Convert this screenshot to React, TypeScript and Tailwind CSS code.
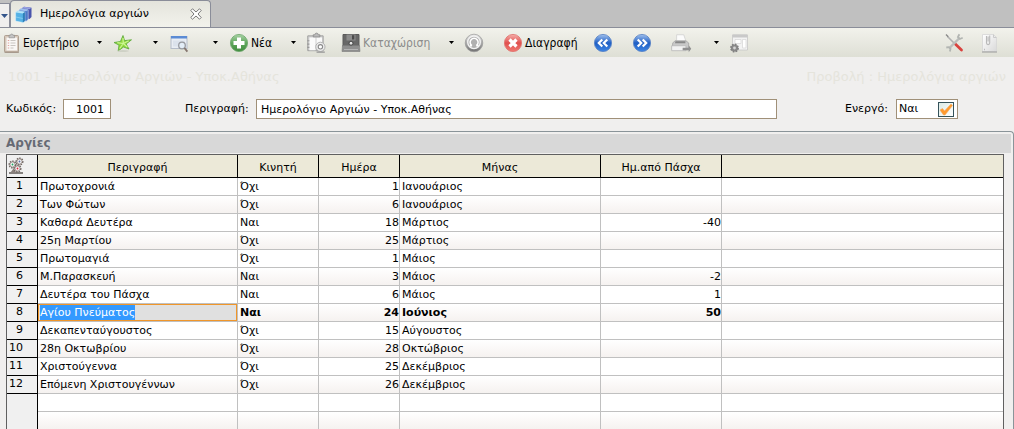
import { useState, type ReactNode } from "react";

type Holiday = {
  name: string;
  movable: string;
  day: number;
  month: string;
  offset?: number;
};

const holidays: Holiday[] = [
  { name: "Πρωτοχρονιά", movable: "Όχι", day: 1, month: "Ιανουάριος" },
  { name: "Των Φώτων", movable: "Όχι", day: 6, month: "Ιανουάριος" },
  { name: "Καθαρά Δευτέρα", movable: "Ναι", day: 18, month: "Μάρτιος", offset: -40 },
  { name: "25η Μαρτίου", movable: "Όχι", day: 25, month: "Μάρτιος" },
  { name: "Πρωτομαγιά", movable: "Όχι", day: 1, month: "Μάιος" },
  { name: "Μ.Παρασκευή", movable: "Ναι", day: 3, month: "Μάιος", offset: -2 },
  { name: "Δευτέρα του Πάσχα", movable: "Ναι", day: 6, month: "Μάιος", offset: 1 },
  { name: "Αγίου Πνεύματος", movable: "Ναι", day: 24, month: "Ιούνιος", offset: 50 },
  { name: "Δεκαπενταύγουστος", movable: "Όχι", day: 15, month: "Αύγουστος" },
  { name: "28η Οκτωβρίου", movable: "Όχι", day: 28, month: "Οκτώβριος" },
  { name: "Χριστούγεννα", movable: "Όχι", day: 25, month: "Δεκέμβριος" },
  { name: "Επόμενη Χριστουγέννων", movable: "Όχι", day: 26, month: "Δεκέμβριος" },
];

const SELECTED_ROW = 7;
const EMPTY_ROWS = 2;

function Gradients() {
  return (
    <svg width="0" height="0" className="absolute" aria-hidden="true">
      <defs>
        <linearGradient id="green" x1="0" y1="0" x2="0" y2="1">
          <stop offset="0" stopColor="#a9d3a6" />
          <stop offset="0.5" stopColor="#5fa75c" />
          <stop offset="1" stopColor="#418c3e" />
        </linearGradient>
        <linearGradient id="red" x1="0" y1="0" x2="0" y2="1">
          <stop offset="0" stopColor="#f6b0ac" />
          <stop offset="0.5" stopColor="#e0504e" />
          <stop offset="1" stopColor="#f07a72" />
        </linearGradient>
        <linearGradient id="blue" x1="0" y1="0" x2="0" y2="1">
          <stop offset="0" stopColor="#a3c2ee" />
          <stop offset="0.5" stopColor="#1f5fc4" />
          <stop offset="1" stopColor="#3f86e4" />
        </linearGradient>
        <linearGradient id="gray" x1="0" y1="0" x2="0" y2="1">
          <stop offset="0" stopColor="#e4e4e4" />
          <stop offset="1" stopColor="#707070" />
        </linearGradient>
        <linearGradient id="paper" x1="0" y1="0" x2="1" y2="1">
          <stop offset="0" stopColor="#ffffff" />
          <stop offset="1" stopColor="#d9d9d9" />
        </linearGradient>
      </defs>
    </svg>
  );
}

function Svg({ size = 20, children }: { size?: number; children: ReactNode }) {
  return (
    <svg width={size} height={size} viewBox="0 0 20 20" className="shrink-0" fill="none" aria-hidden="true">
      {children}
    </svg>
  );
}

const ClipboardIcon = () => (
  <Svg>
    <rect x="3.500" y="2.500" width="14" height="16.500" rx="1" fill="#d6c8ba" stroke="#a39283" strokeWidth=".8" />
    <path d="M5.500 4.500h10.500v13h-10.500z" fill="#f9f7f5" />
    <path d="M8 3.500V2.200h1.500a1.200 1.200 0 0 1 2.400 0h1.600v2.600H8z" fill="#c4c4c4" stroke="#8a8a8a" strokeWidth=".6" />
    <path d="M9.500 7.500h5M9.500 10h5M9.500 12.500h5M9.500 15h3" stroke="#c9c5c1" />
    <path d="M6.800 7.500h1.400M6.800 10h1.400M6.800 12.500h1.400M6.800 15h1.400" stroke="#e0a49f" />
    <path d="M3.500 19.300h14.500" stroke="#8d7a6b" strokeWidth=".7" />
  </Svg>
);

const StarIcon = () => (
  <Svg>
    <path d="M10 2.500l1.600 5.100 6.900-.8-5.300 4.200 2.800 5-5.500-2-5.300 3.900.8-5.800-5-2.600 6.400-1z" fill="#8ed73a" stroke="#5aa83a" strokeWidth=".8" strokeLinejoin="round" />
    <path d="M10 5l.3 5.500-6-.8M10.300 10.500l5.400-2.700M10.300 10.500l4 3.500M10.300 10.500l-3.600 5" stroke="#cdf693" strokeWidth="1.200" />
    <ellipse cx="10" cy="18" rx="6" ry=".7" fill="#c8cbbf" />
  </Svg>
);

const WindowSearchIcon = () => (
  <Svg>
    <rect x="2" y="3.500" width="16" height="12" fill="#e9edf3" stroke="#b4bcc9" />
    <path d="M2 3h16v2.500H2z" fill="#5b8bd4" />
    <path d="M4 7.500h12v6H4z" fill="#dbe2ec" />
    <circle cx="13" cy="12.500" r="3.300" fill="#e3edf7" stroke="#96999f" strokeWidth="1.300" />
    <path d="M15.400 15l3 3.600" stroke="#85766e" strokeWidth="1.900" />
  </Svg>
);

const AddIcon = () => (
  <Svg>
    <circle cx="10" cy="10" r="8.600" fill="url(#green)" stroke="#6ba669" strokeWidth=".8" />
    <path d="M8 4.500h4V8h3.500v4H12v3.500H8V12H4.500V8H8z" fill="#fff" />
  </Svg>
);

const PasteSearchIcon = () => (
  <Svg size={22}>
    <path d="M2.500 3.500h14v13.500h-14z" fill="#d2d2d2" stroke="#9a9a9a" strokeWidth=".8" />
    <path d="M4 5h5.500v11.500H4zM10.500 5h5v9h-5z" fill="#fafafa" />
    <path d="M7.500 4.500V2.500h1.500a1.500 1.500 0 0 1 3 0h1.500v2z" fill="#bbb" stroke="#888" strokeWidth=".7" />
    <path d="M2 8h2M2 11h2M2 14h2" stroke="#999" />
    <circle cx="14" cy="13.500" r="4.200" fill="#ececec" stroke="#a8a8a8" strokeWidth=".8" />
    <circle cx="14" cy="13.500" r="2" fill="#fff" stroke="#8a8a8a" />
    <path d="M10.500 18.300h7.500" stroke="#999" strokeWidth="1.200" />
  </Svg>
);

const SaveIcon = () => (
  <Svg>
    <path d="M2 1.500h16v12H2z" fill="#686868" stroke="#5a5a5a" />
    <path d="M5.500 1.500h9v6h-9z" fill="#8c8c8c" />
    <path d="M11 2.200h2.300v4.300H11z" fill="#4a4a4a" />
    <path d="M1.500 12.500h17l.5 6H1z" fill="#8e8e8e" stroke="#7a7a7a" strokeWidth=".6" />
    <circle cx="10" cy="10.200" r="2" fill="#e6e6e6" stroke="#444" />
    <path d="M3 16.500h14" stroke="#b4b4b4" />
  </Svg>
);

const UndoIcon = () => (
  <Svg>
    <circle cx="10" cy="10" r="8.800" fill="url(#gray)" stroke="#9a9a9a" strokeWidth=".7" />
    <circle cx="10" cy="9.300" r="6.300" fill="#b0b0b0" stroke="#f2f2f2" strokeWidth="1.400" />
    <path d="M8 12.700a4 4 0 1 1 4.200 0M8 12.700h-2M12.200 12.700h2.300" stroke="#fff" strokeWidth="1.500" />
  </Svg>
);

const DeleteIcon = () => (
  <Svg>
    <circle cx="10" cy="10" r="8.600" fill="url(#red)" stroke="#df706c" strokeWidth=".8" />
    <path d="M6.500 6.500l7 7M13.500 6.500l-7 7" stroke="#fff" strokeWidth="3.200" />
  </Svg>
);

const PrevIcon = () => (
  <Svg>
    <circle cx="10" cy="10" r="8.600" fill="url(#blue)" stroke="#5580c4" strokeWidth=".8" />
    <path d="M9.300 6.500l-3.500 3.500 3.500 3.500M14.300 6.500l-3.500 3.500 3.500 3.500" stroke="#fff" strokeWidth="2.200" />
  </Svg>
);

const NextIcon = () => (
  <Svg>
    <circle cx="10" cy="10" r="8.600" fill="url(#blue)" stroke="#5580c4" strokeWidth=".8" />
    <path d="M5.700 6.500l3.500 3.500-3.500 3.500M10.700 6.500l3.500 3.500-3.500 3.500" stroke="#fff" strokeWidth="2.200" />
  </Svg>
);

const PrinterIcon = () => (
  <Svg size={22}>
    <path d="M6 2.500h6.500l2 6H6z" fill="#fbfbfb" stroke="#cfcfcf" strokeWidth=".7" />
    <path d="M2.500 10l2-2h10L17 10v6H2z" fill="#c9c9c9" stroke="#a8a8a8" strokeWidth=".8" />
    <path d="M5 8.500h9v1.800H4.500z" fill="#888" />
    <path d="M1.500 12.500h13V17h-13z" fill="#f2f2f2" stroke="#b6b6b6" strokeWidth=".7" />
    <path d="M11.500 14.300h5.500V12l2.300 3.300-2.300 3.200v-2h-5.500z" fill="#8f8f8f" />
  </Svg>
);

const FormGearIcon = () => (
  <Svg>
    <path d="M3.500 2h15v15h-15z" fill="#f3f3f3" stroke="#c6c6c6" strokeWidth=".8" />
    <path d="M3.500 1.500h15v3h-15z" fill="#c9c9c9" />
    <path d="M6 6.500h6v4H6zM13.500 6.500h3.500v8.500h-3.500z" fill="#fff" stroke="#d5d5d5" strokeWidth=".7" />
    <circle cx="5.500" cy="15" r="3.600" fill="#8a8a8a" stroke="#808080" strokeWidth="1.700" strokeDasharray="1.700 1.100" />
    <circle cx="5.500" cy="15" r="1.400" fill="#d5d5d5" />
  </Svg>
);

const ToolsIcon = () => (
  <Svg>
    <path d="M3.500 3.500l7 7" stroke="#b0b0b0" strokeWidth="1.600" />
    <path d="M2 1.500l2.200 2.200" stroke="#888" strokeWidth="1.400" />
    <path d="M11.300 11l6.200 6" stroke="#d9423e" strokeWidth="2.800" strokeLinecap="round" />
    <path d="M15 5.500L5.500 15" stroke="#bcbebc" strokeWidth="2.400" />
    <path d="M15.400 1.300l-1.500 2.700 2 2 2.800-1.300M2.300 14.500l2.600-.4 1.600 1.700-.6 2.700" stroke="#b2b5b2" strokeWidth="1.800" />
  </Svg>
);

const AttachmentIcon = () => (
  <Svg>
    <path d="M2.500 1.500h11l3 3v14h-14z" fill="url(#paper)" stroke="#d5d5d5" strokeWidth=".8" />
    <path d="M13.500 1.500v3h3" stroke="#cacaca" />
    <path d="M6.500 3v7a1.600 1.600 0 0 0 3.200 0V2.500M8.100 3.500v5" stroke="#b8b8b8" strokeWidth="1.100" />
    <path d="M2 19h15" stroke="#9a9a9a" />
    <path d="M4 16.500h1" stroke="#bbb" strokeWidth="1.300" />
  </Svg>
);

const CubesIcon = () => (
  <svg width="17" height="17" viewBox="0 0 17 17" className="shrink-0" aria-hidden="true">
    <path d="M7 2.200L9 .8l7.500 1v9.200l-2 2L7 12z" fill="#4a55ac" />
    <path d="M7 2.200L9 .8l7.500 1-2 1.500z" fill="#98a2e2" />
    <path d="M3.800 4.200l2.200-1.600 7.200 1.200v9.700l-2 1.700-7.400-1.200z" fill="#4c78c8" stroke="#dfe8f8" strokeWidth=".5" />
    <path d="M3.800 4.200l2.200-1.600 7.200 1.200-2 1.500z" fill="#9fc0ee" />
    <path d="M.6 6.400l2.300-1.700 7 1.300v9l-2 1.500-7.300-1.400z" fill="#55b2e6" stroke="#e3f4fc" strokeWidth=".5" />
    <path d="M.6 6.400l2.300-1.700 7 1.300-2 1.500z" fill="#b5e4f8" />
    <path d="M7.900 7.500l2-1.500v9l-2 1.500z" fill="#2f7fb8" />
    <path d="M1 11l6.700 1.500" stroke="#8fd0f0" strokeWidth=".8" />
  </svg>
);

const CloseIcon = () => (
  <svg width="12" height="12" viewBox="0 0 12 12" aria-hidden="true">
    <path d="M.8 2.500L2.500.8 6 4 9.500.8l1.700 1.700L8 6l3.200 3.500-1.700 1.700L6 8l-3.500 3.200L.8 9.500 4 6z" fill="#fff" stroke="#777" />
  </svg>
);

const Gear = ({ x, y, color }: { x: number; y: number; color: string }) => (
  <g>
    <circle cx={x} cy={y} r="3.200" fill="#fff" stroke="#6d625e" strokeWidth="1.600" strokeDasharray="1.500 .9" />
    <circle cx={x} cy={y} r="2.500" fill="#f6f4f3" stroke="#8b807c" strokeWidth=".7" />
    <circle cx={x} cy={y} r=".9" fill={color} />
  </g>
);

const GearsIcon = () => (
  <svg width="17" height="17" viewBox="0 0 17 17" aria-hidden="true">
    <path d="M1 16h14" stroke="#3d3633" strokeWidth="1.200" />
    <path d="M2.500 15.500l3-4 3 4z" fill="#8b807c" />
    <Gear x={11.5} y={4.500} color="#5a6fae" />
    <Gear x={4.500} y={7.500} color="#16a860" />
    <Gear x={9.500} y={11.500} color="#e0243c" />
  </svg>
);

const Triangle = ({ color }: { color: string }) => (
  <svg width="5" height="3" viewBox="0 0 5 3" aria-hidden="true">
    <path d="M0 0h5L2.500 3z" fill={color} />
  </svg>
);

function Tool({ icon, title, label, className, disabled }: { icon: ReactNode; title: string; label?: string; className: string; disabled?: boolean }) {
  return (
    <button type="button" title={title} disabled={disabled} className={`flex h-full shrink-0 items-center gap-0.5 whitespace-nowrap text-black disabled:text-[#8c8c8c] ${className}`}>
      {icon}
      {label && <span>{label}</span>}
    </button>
  );
}

function Caret({ title }: { title: string }) {
  return (
    <button type="button" title={title} className="flex h-full w-5 shrink-0 items-center justify-center">
      <Triangle color="#000" />
    </button>
  );
}

function Toolbar() {
  return (
    <div role="toolbar" className="flex h-[30px] items-center border-t border-[#8a8d99] bg-linear-to-b from-[#f2f2ec] to-[#dedfd5] pr-2.5 font-['DejaVu_Sans_Condensed','DejaVu_Sans',sans-serif] text-[12px]">
      <Tool className="w-[89px] pl-px" title="Ευρετήριο" label="Ευρετήριο" icon={<ClipboardIcon />} />
      <Caret title="Επιλογές ευρετηρίου" />
      <Tool className="w-9 pl-1" title="Αγαπημένα" icon={<StarIcon />} />
      <Caret title="Επιλογές αγαπημένων" />
      <Tool className="w-10 pl-1" title="Προβολή" icon={<WindowSearchIcon />} />
      <Caret title="Επιλογές προβολής" />
      <Tool className="w-[58px] pl-1" title="Νέα" label="Νέα" icon={<AddIcon />} />
      <Caret title="Επιλογές νέας εγγραφής" />
      <Tool className="w-[34px] pl-0.5" title="Αντιγραφή" icon={<PasteSearchIcon />} />
      <Tool className="w-[104px] pl-1" title="Καταχώριση" label="Καταχώριση" disabled icon={<SaveIcon />} />
      <Caret title="Επιλογές καταχώρισης" />
      <Tool className="w-10 pl-[3px]" title="Αναίρεση" icon={<UndoIcon />} />
      <Tool className="w-[89px] pl-0.5" title="Διαγραφή" label="Διαγραφή" icon={<DeleteIcon />} />
      <Tool className="w-10 pl-[3px]" title="Προηγούμενη" icon={<PrevIcon />} />
      <Tool className="w-9 pl-0.5" title="Επόμενη" icon={<NextIcon />} />
      <Tool className="w-10 pl-1" title="Εκτύπωση" icon={<PrinterIcon />} />
      <Caret title="Επιλογές εκτύπωσης" />
      <Tool className="w-10 pl-[3px]" title="Ρυθμίσεις φόρμας" icon={<FormGearIcon />} />
      <Tool className="ml-auto w-9" title="Εργαλεία" icon={<ToolsIcon />} />
      <Tool className="w-6" title="Συνημμένα" icon={<AttachmentIcon />} />
    </div>
  );
}

function TabStrip() {
  return (
    <div className="flex h-[27px] items-end bg-[#c0c0c0]">
      <button type="button" title="Καρτέλες" className="flex h-6 w-[10px] items-center justify-center border-t border-r border-[#8a8d99] bg-[#f0efee]">
        <svg width="7" height="4" viewBox="0 0 7 4" aria-hidden="true">
          <path d="M0 0h7L3.500 4z" fill="#33558b" />
        </svg>
      </button>
      <div className="flex h-full w-[201px] items-center rounded-t border-x border-t border-[#8a8d99] bg-linear-to-b from-[#e4e4dc] to-[#f2f2ec] pr-2 pl-1">
        <CubesIcon />
        <span className="ml-2 flex-1 whitespace-nowrap">Ημερολόγια αργιών</span>
        <button type="button" title="Κλείσιμο" className="flex">
          <CloseIcon />
        </button>
      </div>
    </div>
  );
}

function RecordForm() {
  const [code, setCode] = useState("1001");
  const [description, setDescription] = useState("Ημερολόγιο Αργιών - Υποκ.Αθήνας");
  const [active, setActive] = useState(true);
  return (
    <form className="flex items-center pt-2.5 pr-14 pl-1.5" onSubmit={(e) => e.preventDefault()}>
      <label htmlFor="code" className="w-[57px] shrink-0 whitespace-nowrap">
        Κωδικός:
      </label>
      <input id="code" value={code} onChange={(e) => setCode(e.target.value)} className="h-5 w-12 border border-[#a09078] bg-white pr-1.5 text-right outline-none" />
      <label htmlFor="description" className="ml-[74px] w-[71px] shrink-0 whitespace-nowrap">
        Περιγραφή:
      </label>
      <input id="description" value={description} onChange={(e) => setDescription(e.target.value)} className="h-5 min-w-0 flex-1 border border-[#a09078] bg-white pl-1 outline-none" />
      <label htmlFor="active" className="ml-[68px] w-[51px] shrink-0 whitespace-nowrap">
        Ενεργό:
      </label>
      <div className="flex h-5 w-[62px] items-center justify-between border border-[#a09078] bg-white pr-[3px] pl-0.5">
        <span>{active ? "Ναι" : "Όχι"}</span>
        <span className="relative flex">
          <input id="active" type="checkbox" checked={active} onChange={(e) => setActive(e.target.checked)} className="peer h-[15px] w-4 appearance-none border border-[#35525a] bg-linear-to-br from-[#dcebe6] to-white" />
          <svg width="16" height="15" viewBox="0 0 16 15" className="pointer-events-none invisible absolute inset-0 peer-checked:visible" aria-hidden="true">
            <path d="M2 8l2.500-1.500L6.500 9 13 2l1.500 1.500L7 13H5.500z" fill="#ff9a2e" stroke="#f0a860" strokeWidth=".6" />
          </svg>
        </span>
      </div>
    </form>
  );
}

const headCell = "h-[23px] border-r border-b border-black bg-[#ece9d8] p-0 pt-1 text-center font-normal";
const bodyCell = "h-[18px] border-r border-b border-[#c0c0c0] p-0 pt-px leading-4 align-bottom";
const numberCell = "h-[18px] border-r border-b border-black bg-[#f0f0f0] p-0 pr-3.5 text-right align-top font-normal leading-4";

function HolidayTable() {
  return (
    <div className="mr-[9px] ml-1.5 border-x border-t border-[#606060] bg-white">
      <table className="w-full table-fixed border-separate border-spacing-0 whitespace-nowrap">
        <colgroup>
          <col className="w-[31px]" />
          <col className="w-[200px]" />
          <col className="w-[81px]" />
          <col className="w-[81px]" />
          <col className="w-[201px]" />
          <col className="w-[121px]" />
          <col />
        </colgroup>
        <thead>
          <tr>
            <th className="h-[23px] border-r border-b border-black bg-[#f0f0f0] p-0 pl-px align-top">
              <button type="button" title="Ρυθμίσεις πίνακα" className="flex pt-0.5">
                <GearsIcon />
              </button>
            </th>
            <th className={headCell}>Περιγραφή</th>
            <th className={headCell}>Κινητή</th>
            <th className={headCell}>Ημέρα</th>
            <th className={headCell}>Μήνας</th>
            <th className={headCell}>Ημ.από Πάσχα</th>
            <th className="border-b border-black bg-[#ece9d8] p-0" />
          </tr>
        </thead>
        <tbody>
          {holidays.map((h, i) => {
            const selected = i === SELECTED_ROW;
            return (
              <tr key={h.name} aria-selected={selected} className="even:bg-linear-to-b even:from-white even:to-[#f5f1ef] aria-selected:font-bold">
                <th scope="row" className={numberCell}>{i + 1}</th>
                {selected ? (
                  <td className="h-[18px] border-r border-b border-[#c0c0c0] p-0 font-normal">
                    <div className="flex h-[17px] items-center border border-[#f0962a] bg-[#e0e0e0] pl-px">
                      <span className="bg-[#3399ff] leading-[15px] text-white">{h.name}</span>
                    </div>
                  </td>
                ) : (
                  <td className={`${bodyCell} pl-0.5`}>{h.name}</td>
                )}
                <td className={`${bodyCell} pl-0.5`}>{h.movable}</td>
                <td className={`${bodyCell} text-right`}>{h.day}</td>
                <td className={`${bodyCell} pl-0.5`}>{h.month}</td>
                <td className={`${bodyCell} text-right`}>{h.offset}</td>
                <td className="border-b border-[#c0c0c0] p-0" />
              </tr>
            );
          })}
          {Array.from({ length: EMPTY_ROWS }, (_, i) => (
            <tr key={i} className="even:bg-linear-to-b even:from-white even:to-[#f5f1ef]">
              <th className="h-[18px] border-r border-black bg-[#f0f0f0] p-0" />
              <td className={bodyCell} />
              <td className={bodyCell} />
              <td className={bodyCell} />
              <td className={bodyCell} />
              <td className={bodyCell} />
              <td className="border-b border-[#c0c0c0] p-0" />
            </tr>
          ))}
        </tbody>
      </table>
    </div>
  );
}

export default function App() {
  return (
    <div className="h-screen overflow-hidden bg-[#f0efee] font-['Verdana','DejaVu_Sans',sans-serif] text-[11px] leading-4 text-black">
      <Gradients />
      <TabStrip />
      <Toolbar />
      <div className="flex justify-between px-2 pt-2 text-[13px] leading-6 text-[#e5e4dc]">
        <span>1001 - Ημερολόγιο Αργιών - Υποκ.Αθήνας</span>
        <span>Προβολή : Ημερολόγια αργιών</span>
      </div>
      <RecordForm />
      <section className="mt-3 rounded-tr border-t border-r border-[#8a9499]">
        <h2 className="mt-0.5 mr-0.5 mb-px h-[19px] bg-[#d8d8d8] pl-1.5 text-[12px] leading-[18px] font-bold text-[#666a74]">Αργίες</h2>
        <HolidayTable />
      </section>
    </div>
  );
}
